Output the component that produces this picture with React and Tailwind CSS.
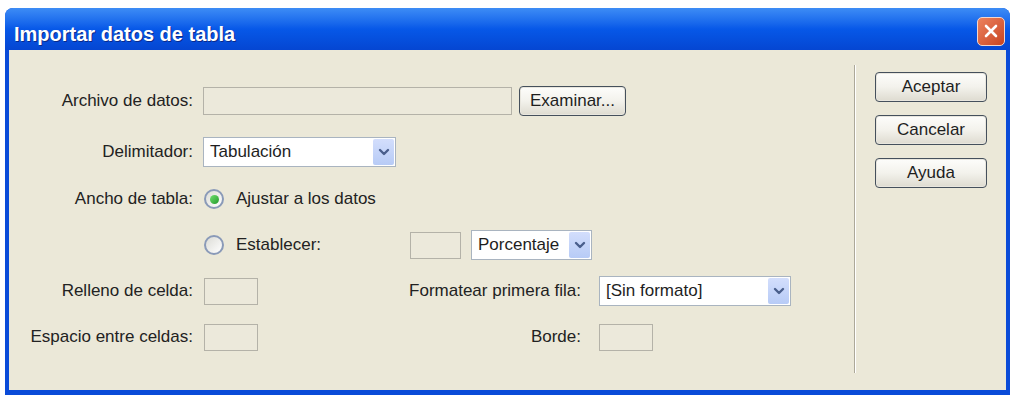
import React from "react";

const font = { fontFamily: '"Liberation Sans", Arial, sans-serif' };

const Chevron = () => (
  <svg width="12" height="10" viewBox="0 0 12 10">
    <path d="M2 3 L6 7 L10 3" fill="none" stroke="#4a5f8c" strokeWidth="2.4" strokeLinecap="round" strokeLinejoin="round" />
  </svg>
);

const Select = ({ value, className }) => (
  <div className={`flex h-[30px] items-stretch border border-[#a9b4c0] bg-white ${className}`}>
    <span className="flex flex-1 items-center pl-[6px] text-[17px] text-[#1e1e1e]">{value}</span>
    <span className="m-[1px] flex w-[21px] items-center justify-center rounded-[2px] bg-gradient-to-b from-[#d3defc] to-[#b7cbf6]">
      <Chevron />
    </span>
  </div>
);

const Field = ({ className }) => (
  <div className={`h-[27px] border border-[#b4b2a8] bg-[#ece9db] ${className}`} />
);

const Button = ({ children, className }) => (
  <button className={`flex h-[30px] items-center justify-center rounded-[4px] border border-[#45505c] bg-gradient-to-b from-[#fdfdfb] via-[#f3f2ec] to-[#dedbd0] text-[17px] text-[#1e1e1e] shadow-[inset_0_0_0_1px_#e8e6de] ${className}`}>
    {children}
  </button>
);

const Radio = ({ checked }) => (
  <span className="flex h-[20px] w-[20px] items-center justify-center rounded-full border-2 border-[#8a9ab8] bg-gradient-to-br from-[#dcdcd6] to-[#ffffff]">
    {checked && <span className="h-[9px] w-[9px] rounded-full bg-gradient-to-br from-[#6fe06f] to-[#1f9a2a]" />}
  </span>
);

const Label = ({ children, className }) => (
  <span className={`text-right text-[17px] text-[#222] ${className}`}>{children}</span>
);

export default function App() {
  return (
    <div className="h-[395px] w-[1012px] bg-white pt-[8px] pl-[5px] pr-[2px]" style={font}>
      <div className="flex h-[387px] flex-col rounded-t-[8px] bg-[#0a4bd8]">
        <div className="flex h-[42px] items-center justify-between rounded-t-[8px] bg-gradient-to-b from-[#3d8cf5] via-[#0758e8] to-[#0546d2] pl-[9px] pr-[5px]">
          <span className="pt-[9px] text-[20px] font-bold text-white [text-shadow:1px_1px_0_#0a2a8a]">Importar datos de tabla</span>
          <span className="mt-[4px] flex h-[29px] w-[28px] items-center justify-center rounded-[5px] border border-[#f3d6cc] bg-gradient-to-br from-[#ec825e] to-[#c8431f]">
            <svg width="16" height="16" viewBox="0 0 16 16">
              <path d="M3 3 L13 13 M13 3 L3 13" stroke="white" strokeWidth="2.6" strokeLinecap="round" />
            </svg>
          </span>
        </div>

        <div className="mx-[4px] mb-[5px] flex flex-1 bg-[#ebe8d8]">
          <div className="flex w-[845px] flex-col pt-[28px]">
            <div className="flex h-[46px] items-center">
              <Label className="w-[184px]">Archivo de datos:</Label>
              <Field className="ml-[10px] h-[28px] w-[309px]" />
              <Button className="ml-[7px] h-[28px] w-[107px] border-[#2f3a44]">Examinar...</Button>
            </div>
            <div className="mt-[5px] flex h-[46px] items-center">
              <Label className="w-[184px]">Delimitador:</Label>
              <Select value="Tabulación" className="ml-[10px] w-[193px]" />
            </div>
            <div className="mt-[1px] flex h-[46px] items-center">
              <Label className="w-[184px]">Ancho de tabla:</Label>
              <span className="ml-[11px] flex items-center gap-[12px]">
                <Radio checked />
                <span className="text-[17px] text-[#222]">Ajustar a los datos</span>
              </span>
            </div>
            <div className="flex h-[46px] items-center">
              <span className="ml-[195px] flex w-[206px] items-center gap-[12px]">
                <Radio />
                <span className="text-[17px] text-[#222]">Establecer:</span>
              </span>
              <Field className="w-[51px]" />
              <Select value="Porcentaje" className="ml-[10px] w-[121px]" />
            </div>
            <div className="flex h-[46px] items-center">
              <Label className="w-[184px]">Relleno de celda:</Label>
              <Field className="ml-[11px] w-[54px]" />
              <Label className="w-[323px]">Formatear primera fila:</Label>
              <Select value="[Sin formato]" className="ml-[18px] w-[192px]" />
            </div>
            <div className="flex h-[46px] items-center">
              <Label className="w-[184px]">Espacio entre celdas:</Label>
              <Field className="ml-[11px] w-[54px]" />
              <Label className="w-[323px]">Borde:</Label>
              <Field className="ml-[18px] w-[54px]" />
            </div>
          </div>

          <div className="mt-[15px] mb-[17px] w-[2px] border-l border-[#aca899] bg-white" />

          <div className="flex flex-col gap-[13px] pl-[19px] pt-[22px]">
            <Button className="w-[112px]">Aceptar</Button>
            <Button className="w-[112px]">Cancelar</Button>
            <Button className="w-[112px]">Ayuda</Button>
          </div>
        </div>
      </div>
    </div>
  );
}
